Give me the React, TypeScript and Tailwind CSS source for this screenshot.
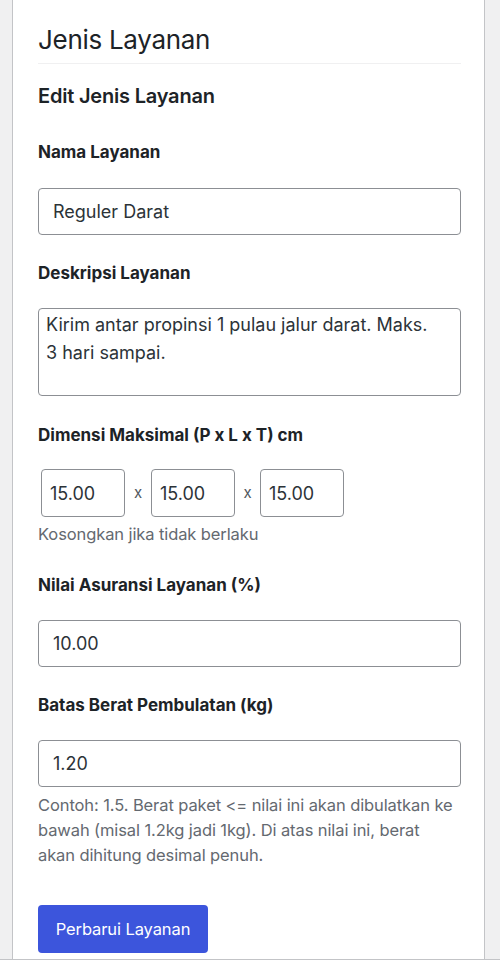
import React from 'react';

const font = { fontFamily: 'Inter, "Noto Sans", sans-serif' };

function Label({ children, className = '' }: { children: React.ReactNode; className?: string }) {
  return <label className={`block text-[17px] leading-[24px] font-bold text-[#1d2327] ${className}`}>{children}</label>;
}

export default function App() {
  return (
    <div className="bg-[#f0f0f1] h-[960px] border-b border-[#c3c4c7] pl-[12px] pr-[15px] overflow-hidden" style={font}>
      <div className="bg-white h-full border-x border-[#c3c4c7] pl-[25px] pr-[23px] pt-[22px] flex flex-col">
        <h1 className="text-[26px] leading-[36px] tracking-[-0.3px] font-normal text-[#1d2327]">Jenis Layanan</h1>
        <hr className="mt-[5px] border-0 border-t border-[#f0f0f1]" />
        <h2 className="mt-[18px] text-[20px] leading-[28px] tracking-[-0.2px] font-semibold text-[#1d2327]">Edit Jenis Layanan</h2>

        <Label className="mt-[30px]">Nama Layanan</Label>
        <input
          defaultValue="Reguler Darat"
          className="mt-[24px] h-[47px] w-full border border-[#8c8f94] rounded-[4px] px-[14px] text-[18px] text-[#2c3338] outline-none"
        />

        <Label className="mt-[26px]">Deskripsi Layanan</Label>
        <textarea
          defaultValue="Kirim antar propinsi 1 pulau jalur darat. Maks. 3 hari sampai."
          className="mt-[23px] h-[88px] w-full border border-[#8c8f94] rounded-[4px] pl-[7px] pr-[20px] pt-[2px] text-[18px] leading-[28px] text-[#2c3338] resize-none outline-none"
        />

        <Label className="mt-[27px]">Dimensi Maksimal (P x L x T) cm</Label>
        <div className="mt-[22px] flex items-center ml-[3px] text-[#2c3338]">
          <input defaultValue="15.00" className="h-[48px] w-[84px] border border-[#8c8f94] rounded-[4px] px-[8px] text-[18px] outline-none" />
          <span className="w-[26px] text-center text-[15px] text-[#50575e]">x</span>
          <input defaultValue="15.00" className="h-[48px] w-[84px] border border-[#8c8f94] rounded-[4px] px-[8px] text-[18px] outline-none" />
          <span className="w-[25px] text-center text-[15px] text-[#50575e]">x</span>
          <input defaultValue="15.00" className="h-[48px] w-[84px] border border-[#8c8f94] rounded-[4px] px-[8px] text-[18px] outline-none" />
        </div>
        <p className="mt-[5px] text-[16.5px] leading-[24px] tracking-[-0.1px] text-[#646970]">Kosongkan jika tidak berlaku</p>

        <Label className="mt-[27px]">Nilai Asuransi Layanan (%)</Label>
        <input
          defaultValue="10.00"
          className="mt-[23px] h-[47px] w-full border border-[#8c8f94] rounded-[4px] px-[14px] text-[18px] text-[#2c3338] outline-none"
        />

        <Label className="mt-[26px]">Batas Berat Pembulatan (kg)</Label>
        <input
          defaultValue="1.20"
          className="mt-[23px] h-[47px] w-full border border-[#8c8f94] rounded-[4px] px-[14px] text-[18px] text-[#2c3338] outline-none"
        />
        <p className="mt-[6px] text-[16.5px] leading-[25px] tracking-[-0.1px] text-[#646970]">
          Contoh: 1.5. Berat paket &lt;= nilai ini akan dibulatkan ke bawah (misal 1.2kg jadi 1kg). Di atas nilai ini, berat akan dihitung desimal penuh.
        </p>

        <div className="mt-[37px]">
          <button className="h-[48px] w-[170px] bg-[#3c55dc] text-white text-[16.5px] tracking-[-0.1px] rounded-[4px]">Perbarui Layanan</button>
        </div>
      </div>
    </div>
  );
}
